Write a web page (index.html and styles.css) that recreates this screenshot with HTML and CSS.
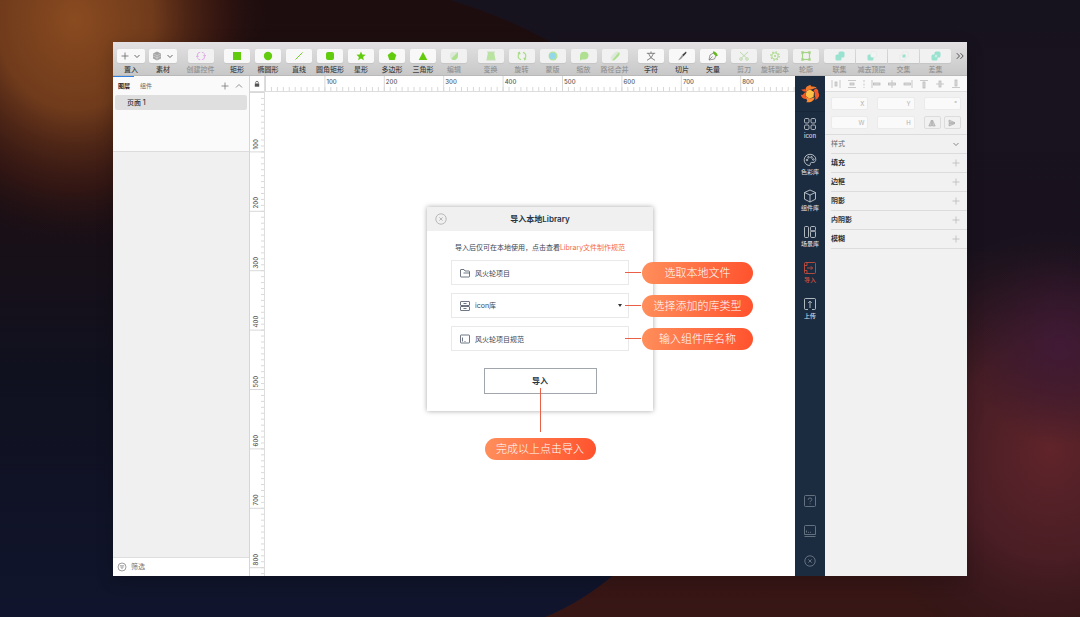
FILE: index.html
```html
<!DOCTYPE html>
<html lang="zh-CN">
<head>
<meta charset="utf-8">
<title>导入本地Library</title>
<link rel="stylesheet" href="styles.css">
</head>
<body>
<svg class="backdrop" viewBox="0 0 1080 617" preserveAspectRatio="none" aria-hidden="true">
  <defs>
    <radialGradient id="bgOrange"><stop offset="0" stop-color="#8a4b20"/><stop offset=".4" stop-color="#79401d" stop-opacity=".9"/><stop offset=".75" stop-color="#4d1f13" stop-opacity=".45"/><stop offset="1" stop-color="#220f10" stop-opacity="0"/></radialGradient>
    <radialGradient id="bgRed"><stop offset="0" stop-color="#60242a"/><stop offset=".5" stop-color="#502028" stop-opacity=".75"/><stop offset="1" stop-color="#2a1420" stop-opacity="0"/></radialGradient>
    <radialGradient id="bgPurple"><stop offset="0" stop-color="#40193a" stop-opacity=".8"/><stop offset="1" stop-color="#2a1430" stop-opacity="0"/></radialGradient>
    <linearGradient id="bgLeft" x1="0" y1="0" x2="0" y2="1"><stop offset="0" stop-color="#1e0d0e"/><stop offset=".3" stop-color="#1c0f14"/><stop offset=".6" stop-color="#10111f"/><stop offset="1" stop-color="#10152d"/></linearGradient>
    <linearGradient id="bgRight" x1="0" y1="0" x2="0" y2="1"><stop offset="0" stop-color="#17131e"/><stop offset=".4" stop-color="#19121e"/><stop offset=".8" stop-color="#35161a"/><stop offset="1" stop-color="#371614"/></linearGradient>
  </defs>
  <rect width="1080" height="617" fill="url(#bgRight)"/>
  <ellipse cx="1050" cy="450" rx="190" ry="220" fill="url(#bgRed)"/>
  <ellipse cx="1060" cy="345" rx="90" ry="100" fill="url(#bgPurple)"/>
  <path d="M0 0H450C650 60 728 200 728 330C728 450 650 575 545 617H0Z" fill="url(#bgLeft)"/>
  <ellipse cx="75" cy="20" rx="195" ry="225" fill="url(#bgOrange)"/>
</svg>

<svg class="sprite" aria-hidden="true">
  <symbol id="plus" viewBox="0 0 8 8"><path d="M4 .5v7M.5 4h7" fill="none" stroke="currentColor" stroke-width=".8"/></symbol>
  <symbol id="down" viewBox="0 0 8 8"><path d="M1.500 3l2.500 2.500L6.500 3" fill="none" stroke="currentColor"/></symbol>
  <symbol id="up" viewBox="0 0 8 8"><path d="M1 5.500l3-3 3 3" fill="none" stroke="currentColor" stroke-width=".8"/></symbol>
  <symbol id="closeRing" viewBox="0 0 12 12"><g fill="none" stroke="currentColor" stroke-width=".8"><circle cx="6" cy="6" r="5.200"/><path d="M4.400 4.400l3.200 3.200M7.600 4.400L4.400 7.600"/></g></symbol>
</svg>

<main class="window">
  <header class="toolbar">
    <div class="group group-tight">
      <div class="tool tool-menu"><button aria-label="置入"><svg class="i8"><use href="#plus"/></svg><svg class="i8"><use href="#down"/></svg></button><span>置入</span></div>
      <div class="tool tool-menu"><button aria-label="素材"><svg class="i10" viewBox="0 0 10 10"><path d="M5 .5l4 2v5l-4 2-4-2v-5z" fill="#a6a6a6"/><path d="M1 2.700l4 2 4-2M1 5l4 2 4-2M5 5v4" fill="none" stroke="#dcdcdc" stroke-width=".6"/></svg><svg class="i8"><use href="#down"/></svg></button><span>素材</span></div>
    </div>
    <div class="group">
      <div class="tool off"><button aria-label="创建控件" disabled><svg class="i10" viewBox="0 0 10 10"><path d="M4.200 1.300Q1.400 1.300 1.400 4v2M5.800 8.700Q8.600 8.700 8.600 6V4M5.800 1.300q2 0 2.600 1.500M4.200 8.700q-2 0-2.600-1.500M0 5l1.400 1.300L2.800 5M7.200 5l1.400-1.300L10 5" fill="none" stroke="#dca6e4" stroke-width=".9"/></svg></button><span>创建控件</span></div>
    </div>
    <div class="group">
      <div class="tool"><button aria-label="矩形"><svg class="i10" viewBox="0 0 10 10"><rect x="1" y="1" width="8" height="8" fill="#63cb0e"/></svg></button><span>矩形</span></div>
      <div class="tool"><button aria-label="椭圆形"><svg class="i10" viewBox="0 0 10 10"><circle cx="5" cy="5" r="4.200" fill="#63cb0e"/></svg></button><span>椭圆形</span></div>
      <div class="tool"><button aria-label="直线"><svg class="i10" viewBox="0 0 10 10"><path d="M1.500 8.500l7-7" stroke="#63cb0e" stroke-width=".9"/></svg></button><span>直线</span></div>
      <div class="tool"><button aria-label="圆角矩形"><svg class="i10" viewBox="0 0 10 10"><rect x="1" y="1" width="8" height="8" rx="2" fill="#63cb0e"/></svg></button><span>圆角矩形</span></div>
      <div class="tool"><button aria-label="星形"><svg class="i10" viewBox="0 0 10 10"><path d="M5 .5l1.300 3 3.300.3-2.500 2.200.8 3.300L5 7.500 2.100 9.300l.8-3.300L.4 3.800l3.300-.3z" fill="#63cb0e"/></svg></button><span>星形</span></div>
      <div class="tool"><button aria-label="多边形"><svg class="i10" viewBox="0 0 10 10"><path d="M5 .8l4.300 3.100L7.700 9H2.300L.7 3.900z" fill="#63cb0e"/></svg></button><span>多边形</span></div>
      <div class="tool"><button aria-label="三角形"><svg class="i10" viewBox="0 0 10 10"><path d="M5 1l4.300 8H.7z" fill="#63cb0e"/></svg></button><span>三角形</span></div>
      <div class="tool off"><button aria-label="编辑" disabled><svg class="i10" viewBox="0 0 10 10"><path d="M9 1v4a4 4 0 01-8 0V4q0-3 3-3z" fill="#dfe8dc"/><path d="M9 1v4a4 4 0 01-6.800 2.800z" fill="#afdf91"/></svg></button><span>编辑</span></div>
    </div>
    <div class="group">
      <div class="tool off"><button aria-label="变换" disabled><svg class="i10" viewBox="0 0 10 10"><path d="M2 1h6l1.500 8h-9z" fill="#b9e3a0"/><path d="M1 1h8M.5 9h9" stroke="#c6dcb8"/></svg></button><span>变换</span></div>
      <div class="tool off"><button aria-label="旋转" disabled><svg class="i10" viewBox="0 0 10 10"><path d="M4 8.700C1 8 .3 4.500 2.300 2M6 1.300C9 2 9.700 5.500 7.700 8M.8 2.200l1.600-.8.600 1.800M9.200 7.800l-1.600.8-.6-1.800" fill="none" stroke="#a6dd84" stroke-width="1.200"/></svg></button><span>旋转</span></div>
      <div class="tool off"><button aria-label="蒙版" disabled><svg class="i10" viewBox="0 0 10 10"><circle cx="5" cy="5" r="4.500" fill="#b6e29a"/><circle cx="4.500" cy="5" r="3.200" fill="#92d7ea"/></svg></button><span>蒙版</span></div>
      <div class="tool off"><button aria-label="缩放" disabled><svg class="i10" viewBox="0 0 10 10"><path d="M1 9.500V5q0-4.300 4.300-4.300t4.200 3.800Q9.500 8.500 5 8.500H3z" fill="#afdf91"/></svg></button><span>缩放</span></div>
      <div class="tool off"><button aria-label="路径合并" disabled><svg class="i10" viewBox="0 0 10 10"><path d="M2 9.300Q-.5 7 1.500 5l3-3.300Q7-.3 9 1z" fill="#dfe8dc"/><path d="M9 1q1.500 2-.5 4.300l-3 3Q4 10 2 9.300z" fill="#afdf91"/></svg></button><span>路径合并</span></div>
    </div>
    <div class="group">
      <div class="tool"><button aria-label="字符"><svg class="i10" viewBox="0 0 10 10"><path d="M5 .5v1.800M.8 2.300h8.400M2.500 2.500Q4 7.500 9 9.300M7.500 2.500Q6 7.500 1 9.300" fill="none" stroke="#666" stroke-width=".8"/></svg></button><span>字符</span></div>
      <div class="tool"><button aria-label="切片"><svg class="i10" viewBox="0 0 10 10"><path d="M9 .5q1 .8 0 2L6.500 5.300 5 4z" fill="#444"/><path d="M5 4l1.500 1.300Q5 8 1 9.500z" fill="#999"/></svg></button><span>切片</span></div>
      <div class="tool"><button aria-label="矢量"><svg class="i10" viewBox="0 0 10 10"><path d="M1 9l1-5 3.500-2L8 4.500 6.500 8z" fill="#f6f6f6" stroke="#777" stroke-width=".7"/><path d="M1 9l3.500-3.500" stroke="#777" stroke-width=".7"/><path d="M5.300.300q3.500.5 4.500 4.500L8 5.200 4.800 2z" fill="#63b91e"/></svg></button><span>矢量</span></div>
      <div class="tool off"><button aria-label="剪刀" disabled><svg class="i10" viewBox="0 0 10 10"><g fill="none" stroke="#b4d6a2" stroke-width=".9"><path d="M1 1l6.300 5.800M9 1L2.700 6.800"/><circle cx="2" cy="8" r="1.300"/><circle cx="8" cy="8" r="1.300"/></g></svg></button><span>剪刀</span></div>
      <div class="tool off"><button aria-label="旋转副本" disabled><svg class="i10" viewBox="0 0 10 10"><g fill="none" stroke="#a8d688"><circle cx="5" cy="5" r="3.200" stroke-width=".9"/><circle cx="5" cy="5" r="4.200" stroke-width="1.200" stroke-dasharray="1.500 1.800"/></g><circle cx="5" cy="5" r="1" fill="#a8d688"/></svg></button><span>旋转副本</span></div>
      <div class="tool off"><button aria-label="轮廓" disabled><svg class="i10" viewBox="0 0 10 10"><rect x="1.500" y="1.500" width="7" height="7" fill="none" stroke="#a6d485" stroke-width="1.200"/><path d="M.3.300h2.400v2.400H.3zM7.300.300h2.400v2.400H7.300zM.3 7.300h2.400v2.400H.3zM7.300 7.300h2.400v2.400H7.300z" fill="#a6d485"/></svg></button><span>轮廓</span></div>
      <div class="booleans">
        <div class="tool off"><button aria-label="联集" disabled><svg class="i10" viewBox="0 0 10 10"><rect x="3.500" y=".5" width="6" height="6" rx="1.500" fill="#9ae2d0"/><rect x=".5" y="3.500" width="6" height="6" rx="1.500" fill="#9ae2d0"/></svg></button><span>联集</span></div>
        <div class="tool off"><button aria-label="减去顶层" disabled><svg class="i10" viewBox="0 0 10 10"><rect x=".5" y="3.500" width="6" height="6" rx="1.500" fill="#9ae2d0"/><rect x="3.700" y=".7" width="5.600" height="5.600" rx="1.300" fill="#f1f4f3" stroke="#dce8e4" stroke-width=".5"/></svg></button><span>减去顶层</span></div>
        <div class="tool off"><button aria-label="交集" disabled><svg class="i10" viewBox="0 0 10 10"><g fill="none" stroke="#dfe7e4" stroke-width=".5"><rect x="3.700" y=".7" width="5.600" height="5.600" rx="1.300"/><rect x=".7" y="3.700" width="5.600" height="5.600" rx="1.300"/></g><path d="M3.500 6.500V5q0-1.500 1.500-1.500h1.500V5q0 1.500-1.500 1.500z" fill="#9ae2d0"/></svg></button><span>交集</span></div>
        <div class="tool off"><button aria-label="差集" disabled><svg class="i10" viewBox="0 0 10 10"><rect x="3.500" y=".5" width="6" height="6" rx="1.500" fill="#9ae2d0"/><rect x=".5" y="3.500" width="6" height="6" rx="1.500" fill="#9ae2d0"/><path d="M3.800 6.200V5q0-1.200 1.200-1.200h1.200V5q0 1.200-1.200 1.200z" fill="#c9efe5"/></svg></button><span>差集</span></div>
      </div>
      <button class="more" aria-label="更多"><svg class="i8" viewBox="0 0 8 8"><path d="M.8 1.200L3.500 4 .8 6.800M4.500 1.200L7.200 4 4.500 6.800" fill="none" stroke="#444" stroke-width=".9"/></svg></button>
    </div>
  </header>

  <div class="workspace">
    <aside class="layers">
      <nav class="tabs">
        <button class="tab active">图层</button><button class="tab">组件</button>
        <button class="tab-icon push" aria-label="添加页面"><svg class="i8"><use href="#plus"/></svg></button>
        <button class="tab-icon" aria-label="收起"><svg class="i8"><use href="#up"/></svg></button>
      </nav>
      <div class="pages"><button class="page">页面 1</button></div>
      <div class="layer-list"></div>
      <div class="filter"><svg class="i10" viewBox="0 0 10 10"><g fill="none" stroke="#777" stroke-width=".7"><circle cx="5" cy="5" r="4"/><path d="M2.800 3.800h4.400M3.500 5.200h3M4.400 6.600h1.200"/></g></svg><span>筛选</span></div>
    </aside>

    <section class="canvas">
      <div class="corner"><svg class="i8" viewBox="0 0 8 8"><rect x="1.800" y="3.500" width="4.400" height="3.200" fill="#555"/><path d="M2.700 3.500V2.300q0-1 1.300-1t1.300 1v1.200" fill="none" stroke="#555" stroke-width=".8"/></svg></div>
      <div class="ruler ruler-x">
        <svg class="ticks" aria-hidden="true"><defs><pattern id="tx" width="5.940" height="16" patternUnits="userSpaceOnUse"><path d="M.5 11v5" stroke="#d4d4d4" stroke-width=".9"/></pattern><pattern id="mx" width="59.400" height="16" patternUnits="userSpaceOnUse"><path d="M.5 0v16" stroke="#d8d8d8"/></pattern></defs><rect width="100%" height="100%" fill="url(#tx)"/><rect width="100%" height="100%" fill="url(#mx)"/></svg>
        <span></span><span>100</span><span>200</span><span>300</span><span>400</span><span>500</span><span>600</span><span>700</span><span>800</span>
      </div>
      <div class="ruler ruler-y">
        <svg class="ticks" aria-hidden="true"><defs><pattern id="ty" width="15" height="5.940" patternUnits="userSpaceOnUse"><path d="M11 .5h4" stroke="#d4d4d4" stroke-width=".9"/></pattern><pattern id="my" width="15" height="59.400" patternUnits="userSpaceOnUse"><path d="M0 .5h15" stroke="#d8d8d8"/></pattern></defs><rect width="100%" height="100%" fill="url(#ty)"/><rect width="100%" height="100%" fill="url(#my)"/></svg>
        <span>100</span><span>200</span><span>300</span><span>400</span><span>500</span><span>600</span><span>700</span><span>800</span>
      </div>
      <div class="artboard"></div>
    </section>

    <nav class="plugin">
      <div class="logo"><svg viewBox="0 0 20 20"><path d="M10 5.500l4 2.500-.5 5-4 1.800-4-3L6.500 7z" fill="#ffc247"/><path d="M6.500 7.500C4.500 5 6 1.500 11 1c-1 1 0 1.500 2 1.500 2 0 3.500.8 4 2-2-.8-3 0-4 .5-2 1-4 0-6.500 2.500z" fill="#f47a2c"/><path d="M13.500 6.500c2-2.500 4-1 4.500-.5.500 1.500 0 2.500.8 3.500C20 12 18 15 15 16c.8-1.500.5-2.500 0-3.500-.8-2 .5-3.500-1.500-6z" fill="#f0592a"/><path d="M14.500 13c0 4-4 6-8.500 5 1-.3 1.500-1 1-2-1.500-1.500-1-3-.5-4 1 2.500 4.500 3.500 8 1z" fill="#ff8a32"/><path d="M7 15C3.500 15.500 1 13.500.8 10.500c1 .8 2 .5 2.700-.5C4.300 9 5 8 6.500 8c-1.500 2.500-1 5 .5 7z" fill="#f0592a"/><path d="M6.500 7.500C4 8 2 7 1.200 5c1.300.8 2.500.5 4 0z" fill="#ef4f25"/></svg></div>
      <a href="#icon"><svg class="i14" viewBox="0 0 14 14"><rect x="1.500" y="1.500" width="4.500" height="4.500" rx="1.200"/><rect x="8" y="1.500" width="4.500" height="4.500" rx="1.200"/><rect x="1.500" y="8" width="4.500" height="4.500" rx="1.200"/><rect x="8" y="8" width="4.500" height="4.500" rx="1.200"/></svg><span>icon</span></a>
      <a href="#color"><svg class="i14" viewBox="0 0 14 14"><path d="M6 12.500C3 12 1 9.500 1.200 6.500 1.500 3.500 4 1.300 7 1.300s5.800 2 5.800 5c0 2-1.200 3.200-2.800 3.200-1.500-.2-2.300-.2-2.600.8-.2.800.2 2.500-1.400 2.200z"/><circle cx="4" cy="7" r=".8"/><circle cx="5.500" cy="4.300" r=".8"/><circle cx="8.500" cy="4.300" r=".8"/><circle cx="10.300" cy="6.500" r=".8"/></svg><span>色彩库</span></a>
      <a href="#component"><svg class="i14" viewBox="0 0 14 14"><path d="M7 1l5.500 2.500v6.700L7 13l-5.500-2.800V3.500zM1.500 3.500L7 6l5.500-2.500M7 6v7"/></svg><span>组件库</span></a>
      <a href="#scene"><svg class="i14" viewBox="0 0 14 14"><rect x="1.500" y="1.500" width="4" height="11" rx="1"/><rect x="7.500" y="1.500" width="5" height="4.500" rx="1.200"/><rect x="7.500" y="6" width="5" height="6.500" rx="1.200"/></svg><span>场景库</span></a>
      <a href="#import" class="current"><svg class="i14" viewBox="0 0 14 14"><rect x="1.500" y="1.500" width="11" height="11" rx="1"/><path d="M4 1.500v3M4 9.500v3M4 7h5.500M7.800 5.200L9.600 7 7.800 8.800M1.500 4.500H4M1.500 9.500H4"/></svg><span>导入</span></a>
      <a href="#upload"><svg class="i14" viewBox="0 0 14 14"><path d="M5 12.500H2.500q-1 0-1-1v-9q0-1 1-1h9q1 0 1 1v9q0 1-1 1H9M7 11V4.500M5.200 6L7 4.200 8.800 6"/></svg><span>上传</span></a>
      <div class="plugin-foot">
        <button aria-label="帮助"><svg class="i12" viewBox="0 0 12 12"><rect x=".5" y=".5" width="11" height="11" rx="1"/><path d="M4.200 4.800q0-1.900 1.800-1.900t1.800 1.600Q7.800 5.500 6.700 6 6 6.400 6 7.200M6 8.400v.9"/></svg></button>
        <button aria-label="面板"><svg class="i12" viewBox="0 0 12 12"><path d="M.5 9.500v-8q0-1 1-1h9q1 0 1 1v8zM.5 11.500h11M2.500 5.500v2M4 7.300h1M6 7.300h1"/></svg></button>
        <button aria-label="关闭插件"><svg class="i12"><use href="#closeRing"/></svg></button>
      </div>
    </nav>

    <aside class="inspector">
      <div class="align">
        <svg class="i10" viewBox="0 0 10 10"><path d="M1 1v8M9 1v8"/><rect x="4" y="3" width="2" height="4"/></svg>
        <svg class="i10" viewBox="0 0 10 10"><path d="M1 1.500h8M1 8.500h8"/><rect x="3" y="4" width="4" height="2"/></svg>
        <svg class="dots" viewBox="0 0 2 10"><path d="M1 1v8" stroke-dasharray="2 1.500"/></svg>
        <svg class="i10" viewBox="0 0 10 10"><path d="M1 1v8"/><rect x="2.500" y="4" width="6.500" height="2"/></svg>
        <svg class="i10" viewBox="0 0 10 10"><path d="M5 1v8"/><rect x="1.500" y="4" width="7" height="2"/></svg>
        <svg class="i10" viewBox="0 0 10 10"><path d="M9 1v8"/><rect x="1" y="4" width="6.500" height="2"/></svg>
        <svg class="i10" viewBox="0 0 10 10"><path d="M1 1.500h8"/><rect x="4" y="3" width="2" height="6"/></svg>
        <svg class="i10" viewBox="0 0 10 10"><path d="M1 5h8"/><rect x="4" y="2" width="2" height="6"/></svg>
        <svg class="i10" viewBox="0 0 10 10"><path d="M1 8.500h8"/><rect x="4" y="1" width="2" height="6"/></svg>
      </div>
      <div class="geometry">
        <label class="num"><input aria-label="X"><span>X</span></label>
        <label class="num"><input aria-label="Y"><span>Y</span></label>
        <label class="num"><input aria-label="角度"><span>°</span></label>
        <label class="num"><input aria-label="W"><span>W</span></label>
        <label class="num"><input aria-label="H"><span>H</span></label>
        <div class="flips"><button aria-label="水平翻转"><svg class="i8" viewBox="0 0 8 8"><path d="M3.500 1v6H.8zM4.500 1v6h2.700z" fill="#ccc" stroke="#aaa" stroke-width=".7"/></svg></button><button aria-label="垂直翻转"><svg class="i8" viewBox="0 0 8 8"><path d="M1 1l6 2.700H1zM1 7l6-2.500H1z" fill="#ccc" stroke="#aaa" stroke-width=".7"/></svg></button></div>
      </div>
      <div class="styles">
        <button class="row light"><span>样式</span><svg class="i8"><use href="#down"/></svg></button>
        <button class="row"><span>填充</span><svg class="i8"><use href="#plus"/></svg></button>
        <button class="row"><span>边框</span><svg class="i8"><use href="#plus"/></svg></button>
        <button class="row"><span>阴影</span><svg class="i8"><use href="#plus"/></svg></button>
        <button class="row"><span>内阴影</span><svg class="i8"><use href="#plus"/></svg></button>
        <button class="row"><span>模糊</span><svg class="i8"><use href="#plus"/></svg></button>
      </div>
    </aside>
  </div>

  <div class="overlay">
    <form class="dialog" aria-labelledby="title">
      <header class="dialog-head"><button type="button" class="close" aria-label="关闭"><svg class="i12"><use href="#closeRing"/></svg></button><h1 id="title">导入本地Library</h1></header>
      <div class="dialog-body">
        <p>导入后仅可在本地使用，点击查看<a href="#spec">Library文件制作规范</a></p>
        <div class="field"><svg class="i12" viewBox="0 0 12 12"><path d="M2 2.500h3l1 1.500h4q.5 0 .5.500V9.500q0 .5-.5.500H2q-.5 0-.5-.500V3q0-.5.500-.5zM4.500 6h6"/></svg><input aria-label="本地文件" value="风火轮项目"><div class="callout"><i></i><b>选取本地文件</b></div></div>
        <div class="field"><svg class="i12" viewBox="0 0 12 12"><rect x="1.500" y="1.500" width="9" height="4" rx=".5"/><rect x="1.500" y="6.500" width="9" height="4" rx=".5"/><path d="M4.500 3.500h3M4.500 8.500h3M3 5.500v1M9 5.500v1"/></svg><select aria-label="库类型"><option>icon库</option></select><svg class="caret" viewBox="0 0 4 3"><path d="M0 0h4L2 3z"/></svg><div class="callout"><i></i><b>选择添加的库类型</b></div></div>
        <div class="field"><svg class="i12" viewBox="0 0 12 12"><rect x="1.500" y="2" width="9" height="8" rx=".5"/><path d="M3.500 4.500v4M5.500 8.500h1"/></svg><input aria-label="组件库名称" value="风火轮项目规范"><div class="callout"><i></i><b>输入组件库名称</b></div></div>
        <div class="submit"><button type="button">导入</button><div class="callout callout-down"><i></i><b>完成以上点击导入</b></div></div>
      </div>
    </form>
  </div>
</main>
</body>
</html>
```

FILE: styles.css
```css
* { box-sizing: border-box; }
body {
  margin: 0;
  min-height: 100vh;
  display: flex;
  padding: 42px 113px 41px;
  background: #17121d;
  color: #333;
  font: 7px/8px Inter, "Noto Sans CJK SC", sans-serif;
}
button, input, select { font: inherit; color: inherit; margin: 0; padding: 0; border: 0; background: none; }
button { display: flex; align-items: center; justify-content: center; }
a { color: inherit; text-decoration: none; }
svg { display: block; flex: none; }
.sprite { position: absolute; width: 0; height: 0; }
.backdrop { position: absolute; inset: 0; width: 100%; height: 100%; z-index: -1; }
.i8 { width: 8px; height: 8px; }
.i10 { width: 10px; height: 10px; }
.i12 { width: 12px; height: 12px; }
.i14 { width: 14px; height: 14px; }

.window { position: relative; flex: 1; min-width: 0; display: flex; flex-direction: column; background: #fff; box-shadow: 0 4px 16px rgba(0, 0, 0, .2); }

.toolbar {
  display: flex;
  justify-content: space-between;
  padding: 7px 3px 1px 4px;
  background: linear-gradient(#e3e1e3, #c8c8c8);
  border-bottom: 1px solid #b9b9b9;
}
.group { display: flex; gap: 5px; }
.group-tight { gap: 4px; }
.tool { width: 26px; display: flex; flex-direction: column; align-items: center; gap: 3px; white-space: nowrap; color: #444; font-weight: 500; }
.tool button { width: 100%; height: 14px; border-radius: 2px; background: #f8f8f8; color: #666; box-shadow: 0 1px 1px rgba(0, 0, 0, .06); }
.tool-menu { width: 28px; }
.tool-menu button { gap: 4px; }
.off { color: #929292; }
.off button { background: #f1f1f1; }
.booleans { display: flex; width: 127px; gap: 1px; }
.booleans .tool { flex: 1; }
.booleans button { border-radius: 0; }
.booleans .tool:first-child button { border-radius: 2px 0 0 2px; }
.booleans .tool:last-child button { border-radius: 0 2px 2px 0; }
.more { width: 8px; height: 14px; }

.workspace { flex: 1; display: flex; min-height: 0; }

.layers { width: 137px; display: flex; flex-direction: column; border-right: 1px solid #d6d6d6; background: #fafafa; }
.tabs { height: 19px; display: flex; align-items: center; gap: 6px; padding: 0 6px 0 5px; color: #666; font-size: 6px; background: linear-gradient(#2f7fe0, #2f7fe0) 0 0 / 21px 1px no-repeat; }
.tab { margin-right: 4px; }
.tab.active { font-weight: 700; color: #222; }
.tab-icon { color: #777; }
.push { margin-left: auto; }
.pages { height: 57px; padding: 0 2px; border-bottom: 1px solid #dcdcdc; }
.page { width: 100%; height: 15px; padding-left: 12px; justify-content: flex-start; border-radius: 2px; background: #dfdfdf; color: #333; font-weight: 500; }
.layer-list { flex: 1; background: #f0f0f0; }
.filter { height: 19px; display: flex; align-items: center; gap: 4px; padding-left: 4px; border-top: 1px solid #ddd; background: #fff; color: #777; }

.canvas { flex: 1; min-width: 0; display: grid; grid-template: 16px 1fr / 15px 1fr; background: #fff; }
.corner { display: grid; place-items: center; border-right: 1px solid #ddd; border-bottom: 1px solid #ddd; }
.ruler { position: relative; display: grid; overflow: hidden; color: #555; font-size: 6px; font-weight: 500; }
.ruler-x { grid-template-columns: repeat(8, 100fr) 92fr; border-bottom: 1px solid #ddd; }
.ruler-y { grid-template-rows: repeat(8, 100fr) 15fr; border-right: 1px solid #ddd; }
.ticks { position: absolute; inset: 0; width: 100%; height: 100%; }
.ruler-x span { padding: 2px; min-width: 0; }
.ruler-y span { writing-mode: vertical-rl; transform: rotate(180deg); padding: 2px 0; justify-self: start; width: 11px; line-height: 11px; }

.plugin { width: 30px; display: flex; flex-direction: column; background: #1c2c40; color: #d5dae0; font-size: 6px; font-weight: 500; }
.logo { height: 36px; display: grid; place-items: center; border-bottom: 1px solid #18263a; }
.logo svg { width: 20px; height: 20px; }
.plugin a { height: 36px; padding-top: 5px; display: flex; flex-direction: column; align-items: center; gap: 1px; }
.plugin svg { fill: none; stroke: currentColor; stroke-width: .8; }
.plugin .logo svg { stroke: none; }
.plugin .current { color: #d9503c; }
.plugin-foot { margin-top: auto; padding-bottom: 9px; display: flex; flex-direction: column; align-items: center; gap: 18px; color: #76818f; }

.inspector { width: 142px; background: #f1f1f1; }
.align { height: 16px; padding: 0 6px; display: flex; align-items: center; justify-content: space-between; background: #f9f9f9; border-bottom: 1px solid #dedede; }
.align svg { fill: #ddd; stroke: #b4b4b4; stroke-width: .7; }
.align .dots { width: 2px; height: 10px; }
.geometry { padding: 5px 6px; display: grid; grid-template-columns: repeat(3, 1fr); gap: 6px 9px; border-bottom: 1px solid #dcdcdc; }
.num { display: flex; align-items: center; height: 13px; padding: 0 3px; background: #fafafa; border: 1px solid #ebebeb; border-radius: 2px; color: #b0b0b0; font-size: 6px; }
.num input { flex: 1; min-width: 0; width: 0; }
.flips { display: flex; gap: 3px; }
.flips button { flex: 1; height: 13px; border: 1px solid #dcdcdc; border-radius: 2px; }
.styles { padding-left: 6px; }
.row { width: 100%; height: 19px; padding-right: 7px; justify-content: space-between; border-bottom: 1px solid #dcdcdc; font-weight: 700; }
.row svg { color: #bbb; }
.light { font-weight: 400; color: #666; }
.light svg { color: #888; }

.overlay { position: absolute; inset: 0; display: grid; place-items: center; pointer-events: none; }
.dialog { width: 226px; background: #fff; box-shadow: 0 0 5px rgba(0, 0, 0, .35); color: #3a4656; pointer-events: auto; }
.dialog-head { height: 24px; display: grid; grid-template-columns: 28px 1fr 28px; align-items: center; background: #f0f0f0; }
.dialog-head h1 { margin: 0; text-align: center; font-size: 8px; line-height: 12px; font-weight: 600; color: #263343; }
.close { color: #aaa; }
.dialog-body { display: flex; flex-direction: column; gap: 8px; padding: 12px 24px 17px; }
.dialog-body p { margin: 0; text-align: center; white-space: nowrap; line-height: 9px; }
.dialog-body p a { color: #f5694b; }
.field { position: relative; height: 25px; display: flex; align-items: center; gap: 4px; padding-left: 7px; border: 1px solid #e9e9e9; }
.field .i12 { fill: none; stroke: #4a5664; stroke-width: .8; }
.field input, .field select { flex: 1; min-width: 0; height: 100%; appearance: none; outline: 0; }
.field .caret { width: 4px; height: 3px; margin-right: 6px; fill: #333; }
.submit { position: relative; align-self: center; margin-top: 9px; }
.submit button { width: 113px; height: 26px; border: 1px solid #a0a6ac; font-size: 8px; font-weight: 700; color: #263343; }
.callout { position: absolute; top: 0; left: calc(100% - 3px); height: 100%; display: flex; align-items: center; gap: 1px; }
.callout i { width: 16px; height: 1px; background: #ea5f45; }
.callout b { width: 111px; height: 22px; border-radius: 11px; background: linear-gradient(100deg, #ff8f5c, #ff522d); color: #fff; font-size: 11px; line-height: 22px; font-weight: 300; text-align: center; white-space: nowrap; }
.callout-down { top: 20px; left: 0; width: 100%; height: auto; flex-direction: column; gap: 6px; }
.callout-down i { width: 1px; height: 44px; }
```
